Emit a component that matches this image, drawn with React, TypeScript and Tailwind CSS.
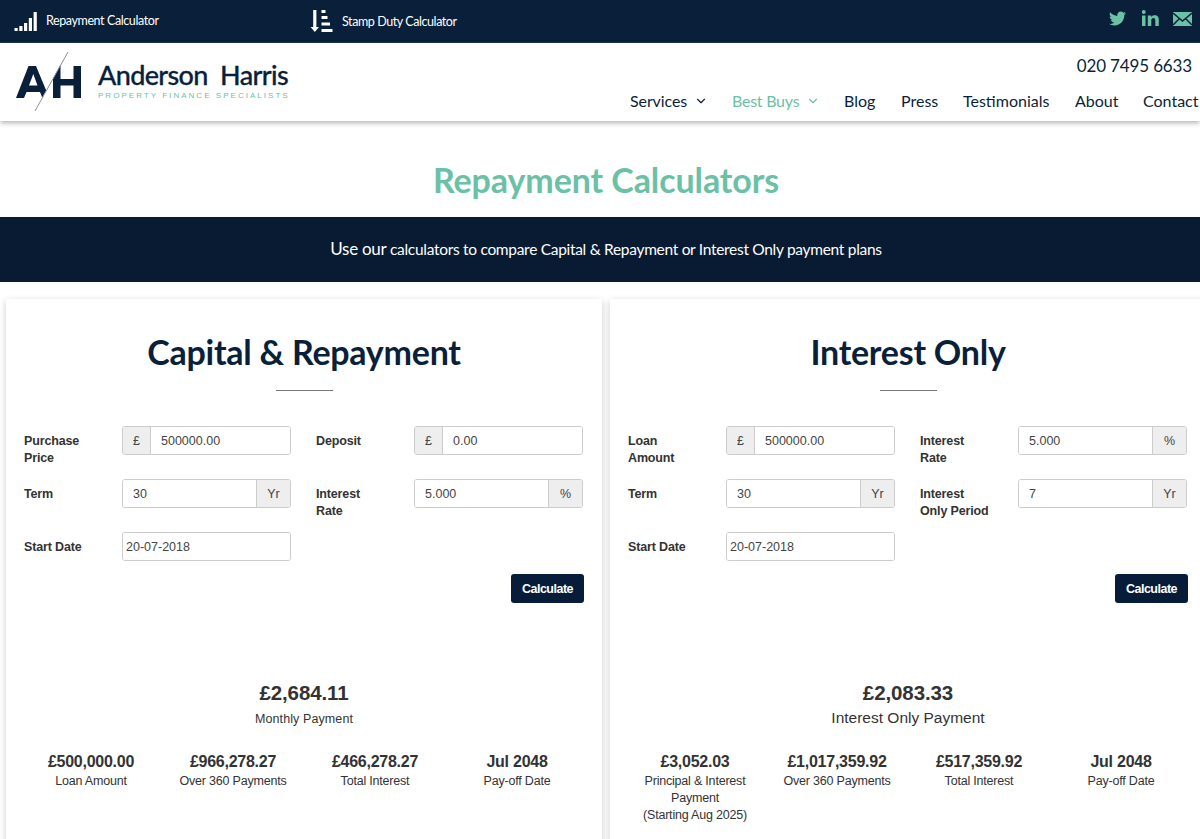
import type { ReactNode } from 'react';
import { ChevronDown } from 'lucide-react';
import { FaTwitter } from 'react-icons/fa';

type Field = { label: string; value: string; prefix?: string; suffix?: string; plain?: boolean };
type Result = { value: string; label: ReactNode };

type CalculatorProps = {
  title: string;
  fields: Field[];
  payment: string;
  paymentLabel: string;
  paymentLabelClass: string;
  results: Result[];
};

const capitalFields: Field[] = [
  { label: 'Purchase Price', value: '500000.00', prefix: '£' },
  { label: 'Deposit', value: '0.00', prefix: '£' },
  { label: 'Term', value: '30', suffix: 'Yr' },
  { label: 'Interest Rate', value: '5.000', suffix: '%' },
  { label: 'Start Date', value: '20-07-2018', plain: true },
];

const interestFields: Field[] = [
  { label: 'Loan Amount', value: '500000.00', prefix: '£' },
  { label: 'Interest Rate', value: '5.000', suffix: '%' },
  { label: 'Term', value: '30', suffix: 'Yr' },
  { label: 'Interest Only Period', value: '7', suffix: 'Yr' },
  { label: 'Start Date', value: '20-07-2018', plain: true },
];

const capitalResults: Result[] = [
  { value: '£500,000.00', label: 'Loan Amount' },
  { value: '£966,278.27', label: 'Over 360 Payments' },
  { value: '£466,278.27', label: 'Total Interest' },
  { value: 'Jul 2048', label: 'Pay-off Date' },
];

const interestResults: Result[] = [
  { value: '£3,052.03', label: <>Principal &amp; Interest<br />Payment<br />(Starting Aug 2025)</> },
  { value: '£1,017,359.92', label: 'Over 360 Payments' },
  { value: '£517,359.92', label: 'Total Interest' },
  { value: 'Jul 2048', label: 'Pay-off Date' },
];

function TopBar() {
  return (
    <div className="flex h-[43px] items-start border-b border-[#1f3350] bg-[#0a1f3a] text-white">
      <div className="flex w-[296px] pl-[14px]">
        <svg className="mt-[11px] h-5 w-6" viewBox="0 0 24 20" fill="currentColor">
          <path d="M0.500 17h3.200v3h-3.200zM5.300 15h3.200v5h-3.200zM10 12h3.200v8h-3.200zM14.800 7h3.200v13h-3.200zM19.600 1h3.200v19h-3.200z" />
        </svg>
        <span className="mt-[11px] ml-2 text-[12.5px] leading-5 tracking-[-0.4px]">Repayment Calculator</span>
      </div>
      <div className="flex pl-[14px]">
        <svg className="mt-[9px] h-6 w-[23px]" viewBox="0 0 23 24" fill="currentColor">
          <path d="M3.200 1h3.200v17h2.600l-4.200 5-4.200-5h2.600zM11.500 1h4v3h-4zM11.500 7h6v3h-6zM11.500 13.500h8.500v3h-8.500zM11.500 20h11v3h-11z" />
        </svg>
        <span className="mt-3 ml-[9px] text-[12.5px] leading-5 tracking-[-0.42px]">Stamp Duty Calculator</span>
      </div>
      <div className="ml-auto flex pr-2 text-[#6bc1a5]">
        <FaTwitter className="mt-2.5 size-[17px]" />
        <svg className="mt-2.5 ml-4 size-[17px]" viewBox="0 0 17 17" fill="currentColor">
          <path d="M0 5.500h3.500V16H0zM1.750 0a1.900 1.900 0 1 1 0 3.900 1.900 1.900 0 0 1 0-3.900zM5.800 5.500h3.300v1.500c.7-1.200 1.900-1.800 3.500-1.800 3.200 0 4.200 1.800 4.200 4.800v6h-3.500v-5.400c0-1.500-.4-2.500-1.700-2.500-1.600 0-2.300 1-2.300 2.600V16H5.800z" />
        </svg>
        <svg className="mt-3 ml-[14px] h-[14px] w-[19px]" viewBox="0 0 19 14">
          <path fill="currentColor" d="M0 0h19v14H0z" />
          <path stroke="#0a1f3a" strokeWidth="1.500" fill="none" d="M0 1l9.500 8L19 1M0 13l6.500-6.500M19 13l-6.500-6.500" />
        </svg>
      </div>
    </div>
  );
}

function Logo() {
  return (
    <div className="flex">
      <svg className="mt-2 ml-[15px] h-[62px] w-[68px]" viewBox="0 0 68 62">
        <path fill="#0a1f3a" fillRule="evenodd" d="M1 47L13.500 15h7.500L31.200 39.500l-4 7-2.200-5.500H11.500L9 47zM14 34.500h8.500L18.300 23z" />
        <path fill="#0a1f3a" d="M38 27.500V47h7.500V34.500h13V47H66V15h-7.500v13h-13V15h-.7z" />
        <path stroke="#8a8f98" strokeWidth="1" d="M53 1L20 60" />
      </svg>
      <div className="ml-[15px] pt-[15px] text-[#0a1f3a]">
        <div className="whitespace-pre text-[27px] leading-[34px] font-medium tracking-[-0.65px] [-webkit-text-stroke:0.3px_#0a1f3a]">Anderson  Harris</div>
        <div className="-mt-px font-['Liberation_Sans'] text-[8px] leading-[10px] tracking-[2.03px] whitespace-nowrap text-[#6bc1a5]">
          PROPERTY FINANCE SPECIALISTS
        </div>
      </div>
    </div>
  );
}

function Header() {
  return (
    <header className="relative flex h-[78px] justify-between bg-white text-[#0a1f3a] shadow-[0_2px_5px_rgba(0,0,0,0.3)]">
      <Logo />
      <div className="flex flex-col items-end">
        <div className="mt-[11px] mr-2 text-[17px] leading-6 tracking-[-0.15px]">020 7495 6633</div>
        <nav className="mt-[11px] mr-[3px] flex text-[16px] leading-6">
          <a className="mr-[25px] flex w-[77px] items-center justify-between tracking-[-0.1px]">Services<ChevronDown className="-mr-px size-[14px]" /></a>
          <a className="mr-[25px] flex w-[87px] items-center justify-between tracking-[-0.25px] text-[#6bc1a5]">Best Buys<ChevronDown className="-mr-px size-[14px]" /></a>
          <a className="w-[57px]">Blog</a>
          <a className="w-[62px]">Press</a>
          <a className="w-[112px]">Testimonials</a>
          <a className="w-[68px]">About</a>
          <a className="w-[54px]">Contact</a>
        </nav>
      </div>
    </header>
  );
}

function FormField({ label, value, prefix, suffix, plain }: Field) {
  const addon = 'flex shrink-0 items-center justify-center bg-[#eeeeee] border-[#cccccc] pt-px';
  return (
    <div className="flex h-[53px] w-[292px] items-start">
      <label className="mt-[7px] w-[98px] shrink-0 pr-[27px] text-[12.5px] leading-[17px] font-bold tracking-[-0.15px] text-[#333333]">{label}</label>
      <div className="flex h-[29px] w-[169px] overflow-hidden rounded-[3px] border border-[#cccccc] text-[12.5px] text-[#444444]">
        {prefix && <span className={`${addon} w-[28px] border-r`}>{prefix}</span>}
        <input
          className={`min-w-0 flex-1 bg-white pt-px outline-none ${plain ? 'px-[3px]' : 'px-[10px]'}`}
          defaultValue={value}
        />
        {suffix && <span className={`${addon} w-[34px] border-l`}>{suffix}</span>}
      </div>
    </div>
  );
}

function Calculator({ title, fields, payment, paymentLabel, paymentLabelClass, results }: CalculatorProps) {
  return (
    <section className="h-[560px] w-[596px] shrink-0 bg-white font-['Liberation_Sans',sans-serif] text-[#333333] shadow-[0_2px_7px_rgba(0,0,0,0.2)]">
      <h2 className="pt-[31px] text-center font-['Lato'] text-[34px] leading-[44px] font-bold tracking-[-0.25px] text-[#0a1f3a]">{title}</h2>
      <div className="mx-auto mt-[16px] h-px w-[57px] bg-[#777777]" />
      <div className="mt-[35px] flex w-[610px] flex-wrap pl-[18px]">
        {fields.map((field) => (
          <FormField key={field.label} {...field} />
        ))}
      </div>
      <div className="-mt-[11px] flex justify-end pr-[18px]">
        <button className="h-[29px] w-[73px] rounded-[3px] bg-[#061c38] pt-px text-[12.5px] font-bold tracking-[-0.5px] text-white">
          Calculate
        </button>
      </div>
      <div className="mt-[77px] text-center">
        <div className="text-[20.5px] leading-[26px] font-bold tracking-[-0.1px]">{payment}</div>
        <div className={paymentLabelClass}>{paymentLabel}</div>
      </div>
      <div className="mt-[20px] grid grid-cols-4 px-[14px] text-center">
        {results.map((result) => (
          <div key={result.value}>
            <div className="text-[16px] leading-[20px] font-bold tracking-[-0.25px]">{result.value}</div>
            <div className="pt-px text-[12.5px] leading-[17px] tracking-[-0.2px]">{result.label}</div>
          </div>
        ))}
      </div>
    </section>
  );
}

function App() {
  return (
    <div className="h-[839px] w-[1200px] overflow-hidden bg-white font-['Lato',sans-serif]">
      <TopBar />
      <Header />
      <h1 className="pt-[37px] pl-[12px] text-center text-[34px] leading-[44px] font-bold tracking-[-0.1px] text-[#6bc1a5]">Repayment Calculators</h1>
      <div className="mt-[15px] flex h-[65px] items-center justify-center bg-[#081b33] pb-0.5 pl-3 text-[15.5px] text-white">
        <p className="tracking-[-0.3px]">
          <span className="text-[17px]">Use our</span> calculators to compare Capital &amp; Repayment or Interest Only payment plans
        </p>
      </div>
      <main className="mt-[17px] flex gap-2 pl-[6px]">
        <Calculator
          title="Capital & Repayment"
          fields={capitalFields}
          payment="£2,684.11"
          paymentLabel="Monthly Payment"
          paymentLabelClass="text-[12.5px] leading-[26px] tracking-[0.1px]"
          results={capitalResults}
        />
        <Calculator
          title="Interest Only"
          fields={interestFields}
          payment="£2,083.33"
          paymentLabel="Interest Only Payment"
          paymentLabelClass="pb-0.5 text-[15.5px] leading-[24px]"
          results={interestResults}
        />
      </main>
    </div>
  );
}

export default App;
